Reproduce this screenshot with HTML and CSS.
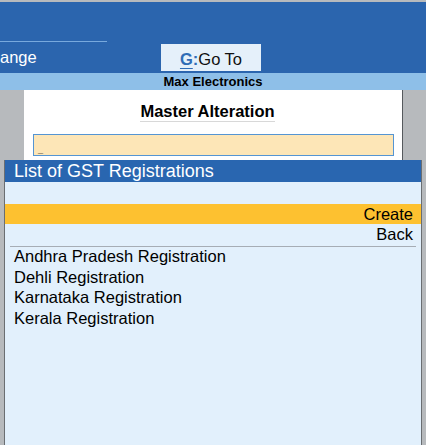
FILE: index.html
```html
<!DOCTYPE html>
<html lang="en">
<head>
  <title>Master Alteration - List of GST Registrations</title>
  <meta charset="UTF-8" />
  <meta name="viewport" content="width=device-width" />
  <link rel="stylesheet" href="styles.css">
</head>
<body>
  <header class="topbar">
    <div class="topbar-rule"></div>
    <div class="menu-row">
      <span class="menu-item">ange</span>
      <button class="goto"><span class="key"><u>G</u>:</span>Go To</button>
    </div>
  </header>
  <div class="company">Max Electronics</div>
  <main class="workspace">
    <section class="master">
      <h1 class="master-title"><span>Master Alteration</span></h1>
      <div class="master-input"><span class="cursor">_</span></div>
    </section>
    <section class="list">
      <div class="list-title">List of GST Registrations</div>
      <div class="list-body">
        <div class="list-gap"></div>
        <div class="action selected">Create</div>
        <div class="action">Back</div>
        <div class="list-rule"></div>
        <ul class="items">
          <li>Andhra Pradesh Registration</li>
          <li>Dehli Registration</li>
          <li>Karnataka Registration</li>
          <li>Kerala Registration</li>
        </ul>
      </div>
    </section>
  </main>
</body>
</html>
```

FILE: styles.css
```css
html, body {
  margin: 0;
  height: 100%;
}

body {
  background-color: #b7babd;
  font-family: "Liberation Sans", Arial, sans-serif;
  overflow: hidden;
  display: flex;
  flex-direction: column;
}

.topbar {
  margin-top: 2px;
  height: 71px;
  background-color: #2b65ae;
  display: flex;
  flex-direction: column;
}

.topbar-rule {
  margin-top: 39px;
  width: 107px;
  height: 1px;
  background-color: #78a9dd;
}

.menu-row {
  display: flex;
  align-items: flex-start;
}

.menu-item {
  width: 161px;
  padding-top: 5px;
  color: #ffffff;
  font-size: 16.5px;
  line-height: 20px;
}

.goto {
  margin-top: 2px;
  width: 100px;
  height: 27px;
  padding: 0;
  border: none;
  background-color: #e5f0fa;
  color: #111111;
  font-family: inherit;
  font-size: 16.5px;
  line-height: 20px;
  padding-top: 2px;
}

.goto .key {
  color: #2f6cb6;
  font-weight: bold;
}

.goto .key u {
  text-decoration-color: #2f6cb6;
  text-underline-offset: 3px;
}

.company {
  height: 17px;
  background-color: #8ebfe8;
  color: #000000;
  font-size: 13px;
  font-weight: bold;
  line-height: 17px;
  text-align: center;
}

.workspace {
  flex: 1;
  display: flex;
  flex-direction: column;
}

.master {
  margin: 0 23px 0 24px;
  height: 70px;
  background-color: #ffffff;
  border-right: 1px solid #55595d;
  box-sizing: border-box;
  padding: 11px 0 0 9px;
}

.master-title {
  margin: 0;
  padding-right: 20px;
  text-align: center;
  font-size: 16.5px;
  line-height: 20px;
}

.master-title span {
  display: inline-block;
  border-bottom: 1px solid #d8d8d8;
}

.master-input {
  margin-top: 12px;
  width: 361px;
  height: 22px;
  box-sizing: border-box;
  border: 1px solid #5595d3;
  background-color: #fde6b7;
  padding-left: 4px;
  line-height: 20px;
}

.cursor {
  font-size: 9px;
  font-weight: bold;
  vertical-align: -3px;
}

.list {
  flex: 1;
  margin: 0 4px;
  border-left: 1px solid #6a6e72;
  border-right: 1px solid #6a6e72;
  background-color: #e2f0fc;
  display: flex;
  flex-direction: column;
}

.list-title {
  height: 22px;
  padding-left: 9px;
  background-color: #2966b0;
  color: #ffffff;
  font-size: 18px;
  line-height: 22px;
}

.list-body {
  font-size: 16.5px;
  line-height: 20px;
  color: #000000;
}

.list-gap {
  height: 22px;
}

.action {
  padding-right: 8px;
  text-align: right;
}

.action.selected {
  background-color: #fdc130;
}

.list-rule {
  margin: 2px 5px 0;
  height: 1px;
  background-color: #a6adb5;
}

.items {
  list-style: none;
  margin: 0;
  padding: 0 0 0 9px;
}

.items li {
  line-height: 20.5px;
  margin-top: -1px;
}

.items li + li {
  margin-top: 0;
}
```
